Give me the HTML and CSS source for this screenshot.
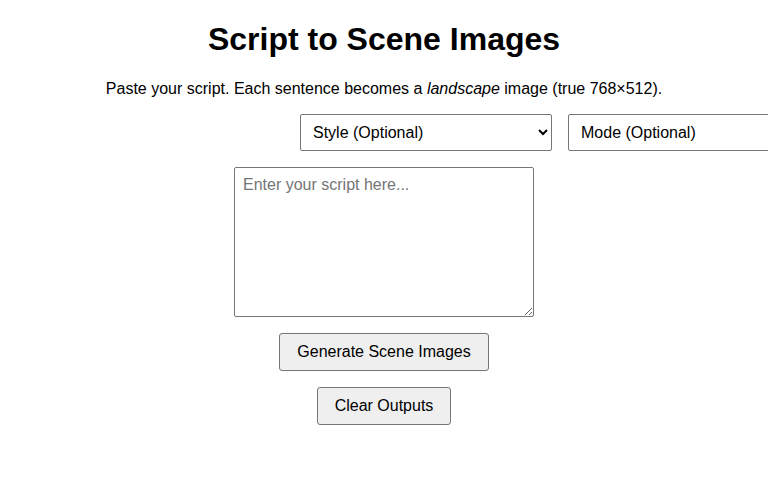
FILE: index.html
```html
<!DOCTYPE html>
<html lang="en">
<head>
<meta charset="utf-8">
<title>Script to Scene Images</title>
<link rel="stylesheet" href="styles.css">
</head>
<body>
<main class="page">
  <h1 class="title">Script to Scene Images</h1>
  <p class="intro">Paste your script. Each sentence becomes a <em>landscape</em> image (true 768×512).</p>
  <div class="options">
    <select class="field select">
      <option>Style (Optional)</option>
    </select>
    <select class="field select">
      <option>Mode (Optional)</option>
    </select>
  </div>
  <textarea class="field script" placeholder="Enter your script here..."></textarea>
  <button class="btn" type="button">Generate Scene Images</button>
  <button class="btn" type="button">Clear Outputs</button>
</main>
</body>
</html>
```
FILE: styles.css
```css
html {
  overflow-x: hidden;
}
body {
  margin: 0;
  background: #fff;
  color: #000;
  font-family: "Liberation Sans", Arial, sans-serif;
}
.page {
  display: flex;
  flex-direction: column;
  align-items: center;
  padding-top: 21px;
}
.title {
  margin: 0;
  font-size: 32px;
  font-weight: bold;
  line-height: 37px;
}
.intro {
  margin: 22px 0 0;
  font-size: 16px;
  line-height: 18px;
}
.options {
  align-self: stretch;
  display: flex;
  gap: 16px;
  margin-top: 16px;
  padding-left: 300px;
}
.field {
  font-family: "Liberation Sans", Arial, sans-serif;
  font-size: 16px;
  color: #000;
  border: 1px solid #767676;
  border-radius: 2px;
  background: #fff;
  box-sizing: border-box;
}
.select {
  flex: none;
  width: 252px;
  height: 37px;
  padding: 0 8px;
}
.script {
  display: block;
  margin-top: 16px;
  width: 300px;
  height: 150px;
  padding: 8px;
  resize: vertical;
}
.script::placeholder {
  color: #757575;
}
.btn {
  margin-top: 16px;
  height: 38px;
  padding: 0 17px;
  font-family: "Liberation Sans", Arial, sans-serif;
  font-size: 16px;
  color: #000;
  background: #efefef;
  border: 1px solid #767676;
  border-radius: 3px;
}
```
